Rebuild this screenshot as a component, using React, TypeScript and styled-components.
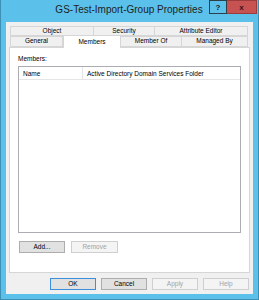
import styled, { createGlobalStyle } from "styled-components";

const GlobalStyle = createGlobalStyle`
  html, body {
    margin: 0;
    padding: 0;
    background: #ffffff;
  }
  body {
    font-family: "Liberation Sans", Arial, sans-serif;
  }
`;

const Window = styled.div`
  width: 259px;
  height: 300px;
  box-sizing: border-box;
  background: #5bc1ea;
  border: 1px solid #3d8fb3;
  border-top: none;
  display: flex;
  flex-direction: column;
`;

const TitleBar = styled.div`
  height: 21px;
  display: grid;
  grid-template-columns: 50px 1fr 50px;
  align-items: start;
  padding-right: 1px;
`;

const Title = styled.div`
  grid-column: 2;
  text-align: center;
  font-size: 10px;
  line-height: 20px;
  color: #1e1e1e;
  white-space: nowrap;
`;

const CaptionButtons = styled.div`
  grid-column: 3;
  display: flex;
  justify-content: flex-end;
`;

const CaptionButton = styled.div<{ $close?: boolean }>`
  width: ${(p) => (p.$close ? "30px" : "18px")};
  height: 14px;
  box-sizing: border-box;
  border: 1px solid ${(p) => (p.$close ? "#9c3b3b" : "#2f3f47")};
  border-left: ${(p) => (p.$close ? "none" : "1px solid #2f3f47")};
  background: ${(p) => (p.$close ? "#c75252" : "#5bc1ea")};
  color: ${(p) => (p.$close ? "#3b1414" : "#1a1a1a")};
  font-size: 8px;
  font-weight: bold;
  display: flex;
  align-items: center;
  justify-content: center;
`;

const Client = styled.div`
  flex: 1;
  margin: 1px 5px 5px 5px;
  background: #f0f0f0;
  display: flex;
  flex-direction: column;
  padding: 4px 3px 0 3px;
  font-size: 6.5px;
  color: #000;
`;

const TabStrip = styled.div`
  display: flex;
  flex-direction: column;
  padding-left: 1px;
`;

const TabRow = styled.div<{ $front?: boolean }>`
  display: flex;
  height: ${(p) => (p.$front ? "11px" : "10px")};
  align-items: flex-end;
`;

const Tab = styled.div<{ $w: number; $active?: boolean }>`
  width: ${(p) => p.$w}px;
  height: ${(p) => (p.$active ? "13px" : "100%")};
  box-sizing: border-box;
  border: 1px solid #d6d6d6;
  border-left: ${(p) => (p.$active ? "1px solid #d6d6d6" : "none")};
  border-bottom: ${(p) => (p.$active ? "none" : "1px solid #d6d6d6")};
  background: ${(p) => (p.$active ? "#ffffff" : "#f0f0f0")};
  margin-bottom: ${(p) => (p.$active ? "-1px" : "0")};
  position: relative;
  z-index: ${(p) => (p.$active ? 2 : 1)};
  display: flex;
  align-items: center;
  justify-content: center;
  white-space: nowrap;
  line-height: 1;
  &:first-child {
    border-left: 1px solid #d6d6d6;
  }
`;

const Panel = styled.div`
  height: 226px;
  box-sizing: border-box;
  border: 1px solid #d6d6d6;
  background: #ffffff;
  padding: 6px 8px 0 8px;
  display: flex;
  flex-direction: column;
`;

const Label = styled.div`
  height: 12px;
  line-height: 10px;
`;

const ListView = styled.div`
  height: 167px;
  box-sizing: border-box;
  border: 1px solid #abadb3;
  background: #fff;
`;

const Header = styled.div`
  display: flex;
  height: 12px;
  border-bottom: 1px solid #e5e5e5;
`;

const Column = styled.div<{ $w?: number }>`
  width: ${(p) => (p.$w ? `${p.$w}px` : "auto")};
  flex: ${(p) => (p.$w ? "none" : "1")};
  box-sizing: border-box;
  padding-left: 4px;
  display: flex;
  align-items: center;
  border-right: ${(p) => (p.$w ? "1px solid #e5e5e5" : "none")};
  white-space: nowrap;
`;

const ButtonRow = styled.div<{ $end?: boolean }>`
  display: flex;
  gap: ${(p) => (p.$end ? "5px" : "6px")};
  justify-content: ${(p) => (p.$end ? "flex-end" : "flex-start")};
  margin-top: ${(p) => (p.$end ? "5px" : "8px")};
  padding-left: ${(p) => (p.$end ? "0" : "1px")};
  padding-right: ${(p) => (p.$end ? "1px" : "0")};
`;

const Button = styled.div<{ $disabled?: boolean; $default?: boolean; $w?: number }>`
  width: ${(p) => p.$w ?? 46}px;
  height: 12px;
  box-sizing: border-box;
  border: 1px solid
    ${(p) => (p.$disabled ? "#cfcfcf" : p.$default ? "#3c8fd8" : "#adadad")};
  background: ${(p) => (p.$disabled ? "#f4f4f4" : "#e1e1e1")};
  color: ${(p) => (p.$disabled ? "#a3a3a3" : "#000")};
  display: flex;
  align-items: center;
  justify-content: center;
  line-height: 1;
`;

export default function App() {
  return (
    <>
      <GlobalStyle />
      <Window>
        <TitleBar>
          <Title>GS-Test-Import-Group Properties</Title>
          <CaptionButtons>
            <CaptionButton>?</CaptionButton>
            <CaptionButton $close>x</CaptionButton>
          </CaptionButtons>
        </TitleBar>
        <Client>
          <TabStrip>
            <TabRow>
              <Tab $w={84}>Object</Tab>
              <Tab $w={61}>Security</Tab>
              <Tab $w={93}>Attribute Editor</Tab>
            </TabRow>
            <TabRow $front>
              <Tab $w={53}>General</Tab>
              <Tab $w={58} $active>
                Members
              </Tab>
              <Tab $w={61}>Member Of</Tab>
              <Tab $w={66}>Managed By</Tab>
            </TabRow>
          </TabStrip>
          <Panel>
            <Label>Members:</Label>
            <ListView>
              <Header>
                <Column $w={64}>Name</Column>
                <Column>Active Directory Domain Services Folder</Column>
              </Header>
            </ListView>
            <ButtonRow>
              <Button>Add...</Button>
              <Button $disabled $w={47}>
                Remove
              </Button>
            </ButtonRow>
          </Panel>
          <ButtonRow $end>
            <Button $default>OK</Button>
            <Button>Cancel</Button>
            <Button $disabled>Apply</Button>
            <Button $disabled>Help</Button>
          </ButtonRow>
        </Client>
      </Window>
    </>
  );
}
